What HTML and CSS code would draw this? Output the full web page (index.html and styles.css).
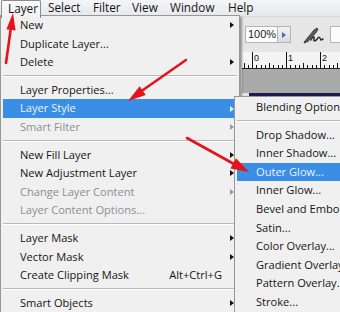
FILE: index.html
```html
<!DOCTYPE html>
<html>
<head>
<meta charset="utf-8">
<link rel="stylesheet" href="styles.css">
</head>
<body>
<div class="page">
  <div class="menubar">
    <div class="mb-item mb-layer active">Layer</div>
    <div class="mb-item mb-select">Select</div>
    <div class="mb-item mb-filter">Filter</div>
    <div class="mb-item mb-view">View</div>
    <div class="mb-item mb-window">Window</div>
    <div class="mb-item mb-help">Help</div>
  </div>
  <div class="stage">
    <div class="menu">
      <div class="row"><span>New</span><i class="sub"></i></div>
      <div class="row"><span>Duplicate Layer...</span></div>
      <div class="row"><span>Delete</span><i class="sub"></i></div>
      <div class="sep"></div>
      <div class="row"><span>Layer Properties...</span></div>
      <div class="row hl"><span>Layer Style</span><i class="sub"></i></div>
      <div class="row dis"><span>Smart Filter</span><i class="sub"></i></div>
      <div class="sep"></div>
      <div class="row"><span>New Fill Layer</span><i class="sub"></i></div>
      <div class="row"><span>New Adjustment Layer</span><i class="sub"></i></div>
      <div class="row dis"><span>Change Layer Content</span><i class="sub"></i></div>
      <div class="row dis"><span>Layer Content Options...</span></div>
      <div class="sep"></div>
      <div class="row"><span>Layer Mask</span><i class="sub"></i></div>
      <div class="row"><span>Vector Mask</span><i class="sub"></i></div>
      <div class="row"><span>Create Clipping Mask</span><em class="key">Alt+Ctrl+G</em></div>
      <div class="sep"></div>
      <div class="row"><span>Smart Objects</span><i class="sub"></i></div>
    </div>
    <div class="workspace">
      <div class="toolbar">
        <div class="zoomfield">100%</div>
        <div class="zoombtn"><i class="blue-tri"></i></div>
        <svg class="pen" width="22" height="18" viewBox="0 0 22 18">
          <path d="M3 15 L12 4 L15 2 L16 3 L14.5 6 L5.5 16 Z" fill="#5a5a5a" stroke="#2a2a2a" stroke-width="0.8"/>
          <path d="M3 15 L2 17 L4.5 16" fill="none" stroke="#2a2a2a" stroke-width="1"/>
          <path d="M9 14 C11 10, 13 10, 12 13 C11 16, 14 15, 16 12 C17 10, 18 12, 19 14 L21 13" fill="none" stroke="#2a2a2a" stroke-width="1.4" stroke-linecap="round"/>
        </svg>
        <div class="minibox"></div>
      </div>
      <div class="ruler">
        <svg width="100" height="16" viewBox="0 0 100 16">
          <g stroke="#111" stroke-width="1">
            <line x1="10.5" y1="0" x2="10.5" y2="16"/>
            <line x1="44.5" y1="0" x2="44.5" y2="16"/>
            <line x1="78.5" y1="0" x2="78.5" y2="16"/>
            <line x1="2.5" y1="11" x2="2.5" y2="16"/>
            <line x1="6.5" y1="13" x2="6.5" y2="16"/>
            <line x1="14.5" y1="13" x2="14.5" y2="16"/>
            <line x1="19.5" y1="13" x2="19.5" y2="16"/>
            <line x1="23.5" y1="13" x2="23.5" y2="16"/>
            <line x1="27.5" y1="11" x2="27.5" y2="16"/>
            <line x1="31.5" y1="13" x2="31.5" y2="16"/>
            <line x1="36.5" y1="13" x2="36.5" y2="16"/>
            <line x1="40.5" y1="13" x2="40.5" y2="16"/>
            <line x1="48.5" y1="13" x2="48.5" y2="16"/>
            <line x1="53.5" y1="13" x2="53.5" y2="16"/>
            <line x1="57.5" y1="13" x2="57.5" y2="16"/>
            <line x1="61.5" y1="11" x2="61.5" y2="16"/>
            <line x1="65.5" y1="13" x2="65.5" y2="16"/>
            <line x1="70.5" y1="13" x2="70.5" y2="16"/>
            <line x1="74.5" y1="13" x2="74.5" y2="16"/>
            <line x1="82.5" y1="13" x2="82.5" y2="16"/>
            <line x1="87.5" y1="13" x2="87.5" y2="16"/>
            <line x1="91.5" y1="13" x2="91.5" y2="16"/>
            <line x1="95.5" y1="11" x2="95.5" y2="16"/>
          </g>
          <text x="12" y="9" font-family="Liberation Sans, sans-serif" font-size="9" fill="#111">0</text>
          <text x="46" y="9" font-family="Liberation Sans, sans-serif" font-size="9" fill="#111">1</text>
          <text x="80" y="9" font-family="Liberation Sans, sans-serif" font-size="9" fill="#111">2</text>
        </svg>
      </div>
      <div class="pasteboard"></div>
      <div class="canvas"></div>
    </div>
    <div class="submenu">
      <div class="row"><span>Blending Options...</span></div>
      <div class="sep"></div>
      <div class="row"><span>Drop Shadow...</span></div>
      <div class="row"><span>Inner Shadow...</span></div>
      <div class="row hl"><span>Outer Glow...</span></div>
      <div class="row"><span>Inner Glow...</span></div>
      <div class="row"><span>Bevel and Emboss...</span></div>
      <div class="row"><span>Satin...</span></div>
      <div class="row"><span>Color Overlay...</span></div>
      <div class="row"><span>Gradient Overlay...</span></div>
      <div class="row"><span>Pattern Overlay...</span></div>
      <div class="row"><span>Stroke...</span></div>
    </div>
  </div>
  <svg class="annot" width="340" height="312" viewBox="0 0 340 312">
    <g stroke="#e3151b" stroke-width="2.6" stroke-linecap="round" fill="none">
      <line x1="6" y1="63" x2="11" y2="27"/>
      <line x1="186" y1="60" x2="143" y2="90"/>
      <line x1="187" y1="138" x2="234" y2="164"/>
    </g>
    <g fill="#e3151b">
      <polygon points="13,13 15.6,30.6 6.4,29.2"/>
      <polygon points="128,101 145.8,95 139.6,86.2"/>
      <polygon points="249,172 230.4,168.6 236,158.2"/>
    </g>
  </svg>
</div>
</body>
</html>
```

FILE: styles.css
```css
html, body {
  margin: 0;
  padding: 0;
}
body {
  width: 340px;
  height: 312px;
  overflow: hidden;
  background: #e4e4e4;
  font-family: "Open Sans", "DejaVu Sans", sans-serif;
  font-size: 11.1px;
  font-weight: 500;
  color: #151515;
}
.page {
  position: relative;
  width: 340px;
  height: 312px;
  overflow: hidden;
}
.menubar {
  display: flex;
  height: 17px;
  background: linear-gradient(#f4f5f7, #e6e8ec);
  border-bottom: 1px solid #d8d8d8;
  box-sizing: border-box;
  font-size: 11.8px;
}
.mb-item {
  box-sizing: border-box;
  padding-left: 7px;
  line-height: 15px;
  height: 17px;
  white-space: nowrap;
}
.mb-layer { width: 40px; margin-left: 1px; }
.mb-select { width: 45px; }
.mb-filter { width: 39px; }
.mb-view { width: 38px; }
.mb-window { width: 58px; }
.mb-help { width: 50px; }
.mb-item.active {
  background: linear-gradient(#fbfbfb, #f1f1f1);
  border: 1px solid #8c8c8c;
  border-bottom: none;
  border-radius: 2px 2px 0 0;
  padding-left: 6px;
  position: relative;
  z-index: 3;
  height: 18px;
}
.stage {
  display: flex;
  position: relative;
}
.menu {
  position: relative;
  z-index: 2;
  width: 240px;
  flex: none;
  margin-top: -2px;
  background: #f0f0f0;
  border: 1px solid #979797;
  border-bottom: none;
  box-sizing: border-box;
  padding: 0 2px;
  box-shadow: 2px 2px 2px rgba(0,0,0,0.35);
}
.row {
  display: flex;
  align-items: center;
  height: 18.6px;
  line-height: 18.6px;
  padding-left: 17px;
  padding-right: 3px;
  white-space: nowrap;
}
.row span { flex: 1; }
.row.dis { color: #8e8e8e; }
.row.hl {
  background: #3a8ee6;
  color: #eaf3ff;
}
.sub {
  width: 0;
  height: 0;
  border-top: 3.5px solid transparent;
  border-bottom: 3.5px solid transparent;
  border-left: 4px solid #111;
}
.row.dis .sub { border-left-color: #999; }
.row.hl .sub { border-left-color: #e6f0ff; }
.key {
  font-style: normal;
  padding-right: 12px;
}
.sep {
  height: 9px;
  display: flex;
  align-items: center;
}
.sep::before {
  content: "";
  flex: 1;
  height: 0;
  border-top: 1px solid #b9b9b9;
  border-bottom: 1px solid #ffffff;
}
.workspace {
  flex: 1;
  display: flex;
  flex-direction: column;
  margin-left: 2px;
}
.toolbar {
  height: 35px;
  display: flex;
  align-items: center;
  background: #e6e6e6;
  padding-left: 3px;
  box-sizing: border-box;
}
.zoomfield {
  width: 33px;
  height: 17px;
  box-sizing: border-box;
  background: #fdfdfd;
  border: 1px solid #b4b4b4;
  font-size: 11px;
  font-weight: 400;
  line-height: 15px;
  padding-left: 2px;
  color: #222;
  font-family: "Liberation Sans", sans-serif;
}
.zoombtn {
  width: 13px;
  height: 17px;
  box-sizing: border-box;
  border: 1px solid #b4b4b4;
  border-left: none;
  background: linear-gradient(#f2f2f2, #dadada);
  display: flex;
  align-items: center;
  justify-content: center;
}
.blue-tri {
  width: 0;
  height: 0;
  border-top: 3px solid transparent;
  border-bottom: 3px solid transparent;
  border-left: 4px solid #3b6fc4;
}
.pen {
  margin-left: 11px;
}
.minibox {
  margin-left: 6px;
  width: 12px;
  height: 17px;
  background: #fbfbfb;
  border: 1px solid #b4b4b4;
  box-sizing: border-box;
}
.ruler {
  height: 16px;
  background: #f4f4f4;
  border-bottom: 1px solid #222;
}
.ruler svg { display: block; }
.pasteboard {
  height: 24px;
  background: #a9a9a9;
}
.canvas {
  flex: 1;
  background: #a9a9a9;
  border-top: 6px solid #1e1a4e;
  margin-left: 7px;
}
.submenu {
  position: absolute;
  left: 234px;
  top: 79px;
  width: 120px;
  height: 240px;
  z-index: 4;
  background: #f0f0f0;
  border: 1px solid #979797;
  box-sizing: border-box;
  padding: 1px 0 0 2px;
  box-shadow: 2px 2px 2px rgba(0,0,0,0.35);
}
.submenu .row {
  padding-left: 19px;
}
.annot {
  position: absolute;
  left: 0;
  top: 0;
  z-index: 10;
  pointer-events: none;
}
```
